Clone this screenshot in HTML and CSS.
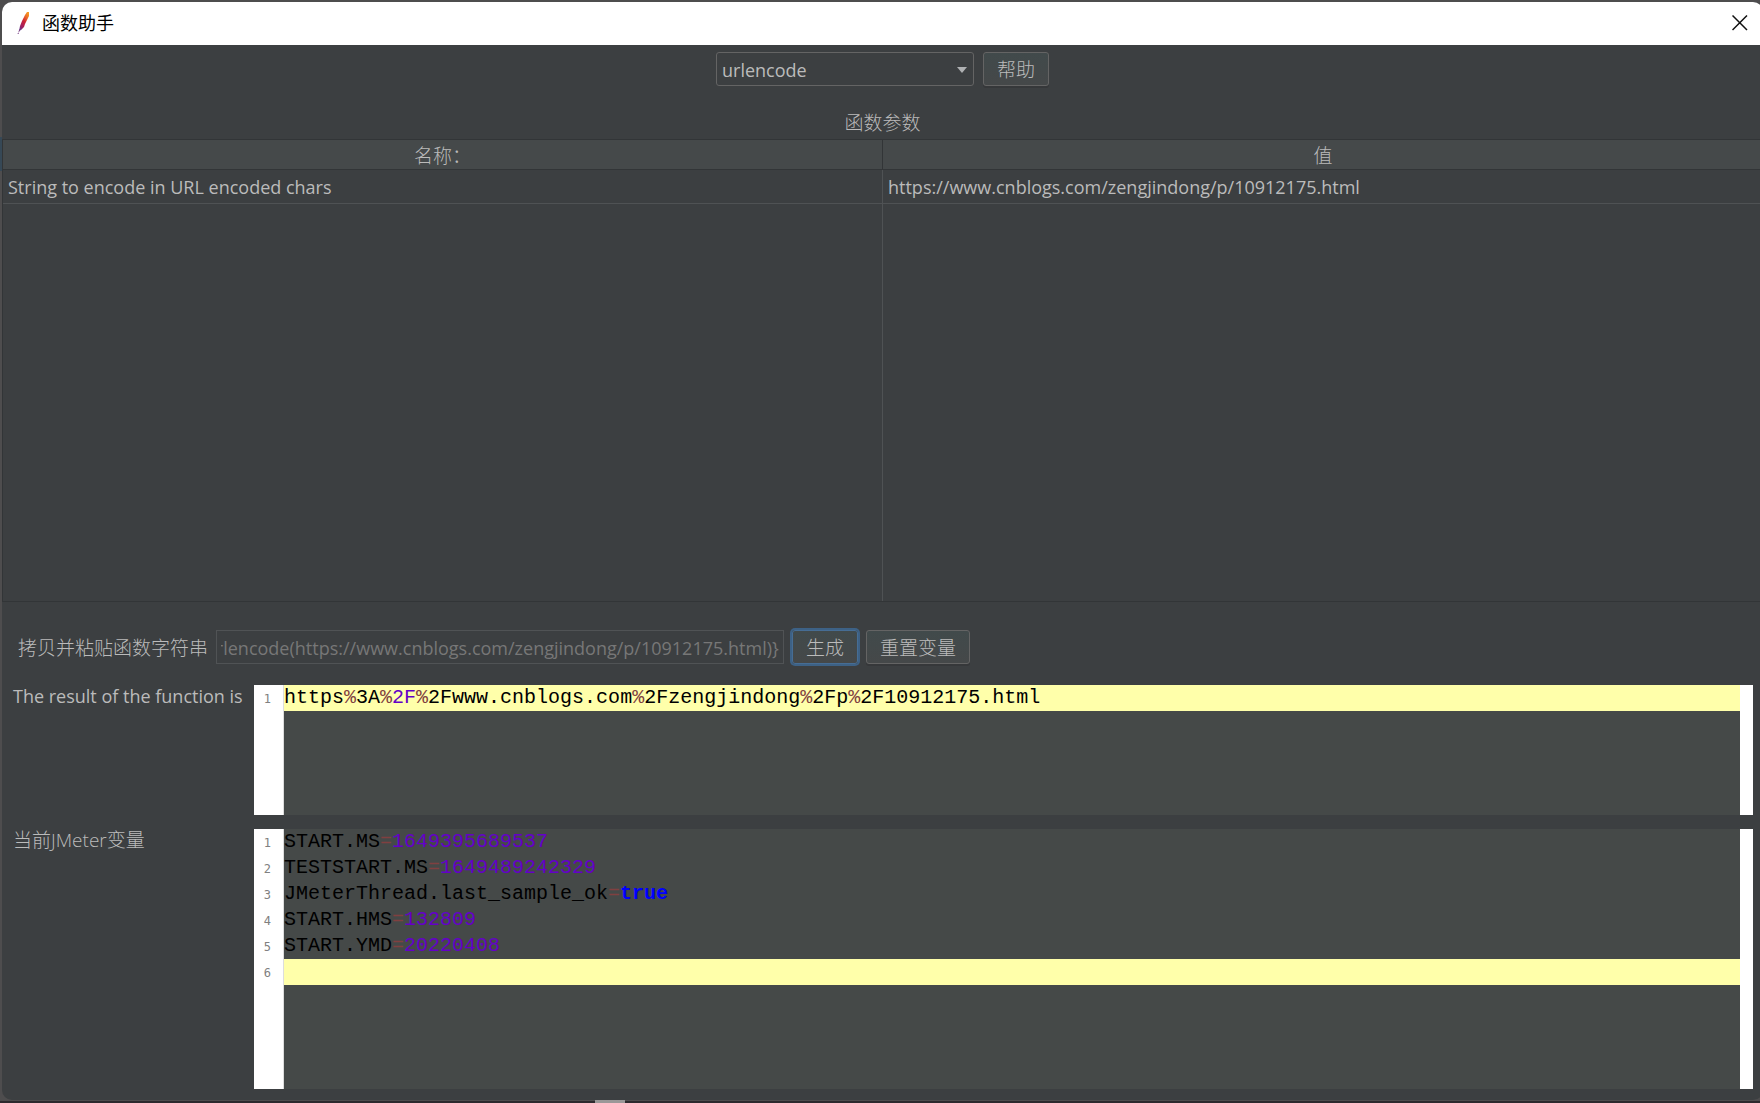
FILE: index.html
```html
<!DOCTYPE html>
<html lang="zh-CN">
<head>
<meta charset="utf-8">
<meta name="viewport" content="width=device-width, initial-scale=1">
<title>函数助手</title>
<link rel="stylesheet" href="styles.css">
</head>
<body>
<div class="window">
  <header class="titlebar">
    <svg class="feather" width="16" height="24" viewBox="0 0 16 24" aria-hidden="true">
      <defs>
        <linearGradient id="plume" x1="0.8" y1="0" x2="0.2" y2="1">
          <stop offset="0" stop-color="#f69923"/>
          <stop offset="0.25" stop-color="#e8622a"/>
          <stop offset="0.5" stop-color="#cb2138"/>
          <stop offset="0.8" stop-color="#9e2064"/>
          <stop offset="1" stop-color="#5c3a8c"/>
        </linearGradient>
      </defs>
      <path d="M11 1 L13 1 L13 5 L11 9 L9 13 L8 16 L5 19 L3 20 L4 15 L6 10 L9 4 Z" fill="url(#plume)"/>
      <path d="M4 18 L2 23" stroke="#7a3f86" stroke-width="1" stroke-dasharray="3 1" fill="none"/>
    </svg>
    <h1 class="title">函数助手</h1>
    <button class="close" type="button" aria-label="关闭">
      <svg width="16" height="16" viewBox="0 0 16 16"><path d="M0.5 0.5 L15 15 M15 0.5 L0.5 15" stroke="#111" stroke-width="1.5" fill="none"/></svg>
    </button>
  </header>

  <main class="content">
    <div class="chooser">
      <div class="select-wrap">
        <select class="select" aria-label="函数">
          <option>urlencode</option>
        </select>
        <svg class="arrow" width="10" height="6" viewBox="0 0 10 6" aria-hidden="true"><path d="M0 0 H10 L5 6 Z" fill="#afb1b3"/></svg>
      </div>
      <button class="button" type="button">帮助</button>
    </div>

    <h2 class="caption" id="params">函数参数</h2>
    <div class="params">
      <table class="table" aria-labelledby="params">
        <thead><tr><th>名称：</th><th>值</th></tr></thead>
        <tbody>
          <tr><td>String to encode in URL encoded chars</td><td>https://www.cnblogs.com/zengjindong/p/10912175.html</td></tr>
          <tr class="filler"><td></td><td></td></tr>
        </tbody>
      </table>
    </div>

    <div class="generate">
      <label for="fn">拷贝并粘贴函数字符串</label>
      <input class="field" id="fn" type="text" readonly value="${__urlencode(https://www.cnblogs.com/zengjindong/p/10912175.html)}">
      <button class="button focused" type="button">生成</button>
      <button class="button" type="button">重置变量</button>
    </div>

    <div class="results">
      <div class="label" id="result-label">The result of the function is</div>
      <div class="editor short">
        <ol class="gutter"><li>1</li></ol>
        <div class="code" role="textbox" aria-multiline="true" aria-labelledby="result-label" tabindex="0">
          <div class="line current">https<span class="op">%</span>3A<span class="op">%</span><span class="num">2F</span><span class="op">%</span>2Fwww.cnblogs.com<span class="op">%</span>2Fzengjindong<span class="op">%</span>2Fp<span class="op">%</span>2F10912175.html</div>
        </div>
      </div>
      <div class="label cjk" id="vars-label">当前JMeter变量</div>
      <div class="editor tall">
        <ol class="gutter"><li>1</li><li>2</li><li>3</li><li>4</li><li>5</li><li>6</li></ol>
        <div class="code" role="textbox" aria-multiline="true" aria-labelledby="vars-label" tabindex="0">
          <div class="line">START.MS<span class="op">=</span><span class="num">1649395689537</span></div>
          <div class="line">TESTSTART.MS<span class="op">=</span><span class="num">1649489242329</span></div>
          <div class="line">JMeterThread.last_sample_ok<span class="op">=</span><span class="bool">true</span></div>
          <div class="line">START.HMS<span class="op">=</span><span class="num">132809</span></div>
          <div class="line">START.YMD<span class="op">=</span><span class="num">20220408</span></div>
          <div class="line current"></div>
        </div>
      </div>
    </div>
  </main>
</div>
<script src="script.js"></script>
</body>
</html>
```
FILE: styles.css
```css
* {
  box-sizing: border-box;
}

body {
  margin: 0;
  min-height: 100vh;
  padding: 2px 0 3px 2px;
  display: flex;
  overflow-x: hidden;
  font: 18px/26px "Open Sans", "Noto Sans CJK SC", sans-serif;
  color: #bbbbbb;
  background:
    linear-gradient(#9a9898, #9a9898) 595px 100% / 30px 3px no-repeat,
    linear-gradient(#2d2a2e, #2d2a2e) 0 100% / 100% 2px no-repeat,
    linear-gradient(#364856, #364856) 0 137px / 2px 34px no-repeat,
    #4e4d4e;
}

/* The dialog runs slightly past the right edge of the desktop. */
.window {
  flex: 1;
  min-width: 0;
  margin-right: -3px;
  display: flex;
  flex-direction: column;
  border-radius: 10px;
  overflow: hidden;
  background: #3c3f41;
}

.titlebar {
  height: 43px;
  padding: 0 15px 2px 14px;
  display: flex;
  align-items: center;
  background: #ffffff;
  color: #000000;
}

.feather {
  margin-right: 10px;
}

.title {
  flex: 1;
  margin: 0;
  font-size: 18px;
  font-weight: 400;
  line-height: 26px;
}

.close {
  width: 16px;
  height: 16px;
  padding: 0;
  border: 0;
  background: none;
}

.close svg {
  display: block;
}

.content {
  flex: 1;
  display: flex;
  flex-direction: column;
}

.chooser {
  padding-top: 7px;
  display: flex;
  justify-content: center;
  gap: 9px;
}

.select-wrap {
  position: relative;
  width: 258px;
}

.select {
  appearance: none;
  width: 100%;
  height: 34px;
  padding: 2px 5px 0;
  border: 1px solid #646464;
  border-radius: 3px;
  background: #3c3f41;
  color: inherit;
  font: inherit;
}

.arrow {
  position: absolute;
  right: 7px;
  top: 15px;
  pointer-events: none;
}

.button {
  height: 34px;
  padding: 2px 13px 0;
  border: 1px solid #646464;
  border-radius: 3px;
  background: linear-gradient(#414a4b, #454849);
  box-shadow: 0 2px 0 #36383a;
  color: inherit;
  font-family: inherit;
  font-size: 19px;
  font-weight: 300;
  line-height: 26px;
}

.focused {
  border-color: #466d94;
  box-shadow: 0 0 0 2px #3d6185;
}

.caption {
  margin: 24px 0 3px;
  font-size: 19px;
  font-weight: 300;
  line-height: 26px;
  text-align: center;
}

.params {
  flex: 1;
  display: flex;
  min-height: 200px;
  border: solid #323537;
  border-width: 1px 0 1px 1px;
}

.table {
  width: 100%;
  table-layout: fixed;
  border-collapse: separate;
  border-spacing: 0;
}

.table th,
.table td {
  padding: 0 5px;
}

.table th {
  height: 30px;
  padding-top: 2px;
  background: #45494a;
  border-bottom: 1px solid #323537;
  font-size: 19px;
  font-weight: 300;
}

.table th:first-child {
  border-right: 1px solid #323537;
}

.table td {
  height: 34px;
  border-bottom: 1px solid #4f5254;
}

.table td:first-child {
  border-right: 1px solid #4f5254;
}

.table .filler td {
  height: auto;
  border-bottom: 0;
}

.generate {
  padding: 28px 16px 21px;
  display: flex;
  align-items: center;
  gap: 8px;
}

.generate label {
  padding-top: 2px;
  font-size: 19px;
  font-weight: 300;
}

.field {
  width: 568px;
  height: 34px;
  padding: 2px 4px 0;
  border: 1px solid #505355;
  background: #3c3f41;
  color: #777777;
  font: inherit;
}

.results {
  padding: 0 10px 11px 11px;
  display: grid;
  grid-template-columns: 232px 1fr;
  column-gap: 9px;
  row-gap: 14px;
}

.label {
  line-height: 22px;
}

.cjk {
  font-size: 19px;
  font-weight: 300;
}

.editor {
  display: flex;
  background: #454948;
  border-right: 13px solid #ffffff;
}

.short {
  height: 130px;
}

.tall {
  height: 260px;
}

.gutter {
  width: 30px;
  margin: 0;
  padding: 1px 12px 0 0;
  list-style: none;
  background: #ffffff;
  border-right: 1px solid #dddddd;
  color: #808080;
  font: 12px/26px "DejaVu Sans Mono", monospace;
  text-align: right;
}

.code {
  flex: 1;
  font: 20px/26px "Liberation Mono", monospace;
  color: #000000;
}

.line {
  height: 26px;
  white-space: pre;
}

.current {
  background: #ffffaa;
}

.op {
  color: #804040;
}

.num {
  color: #6400c8;
}

.bool {
  color: #0000ff;
  font-weight: 700;
}
```
FILE: script.js
```js
// Keep the end of the generated function string in view.
const field = document.getElementById('fn');
field.scrollLeft = field.scrollWidth;
```
